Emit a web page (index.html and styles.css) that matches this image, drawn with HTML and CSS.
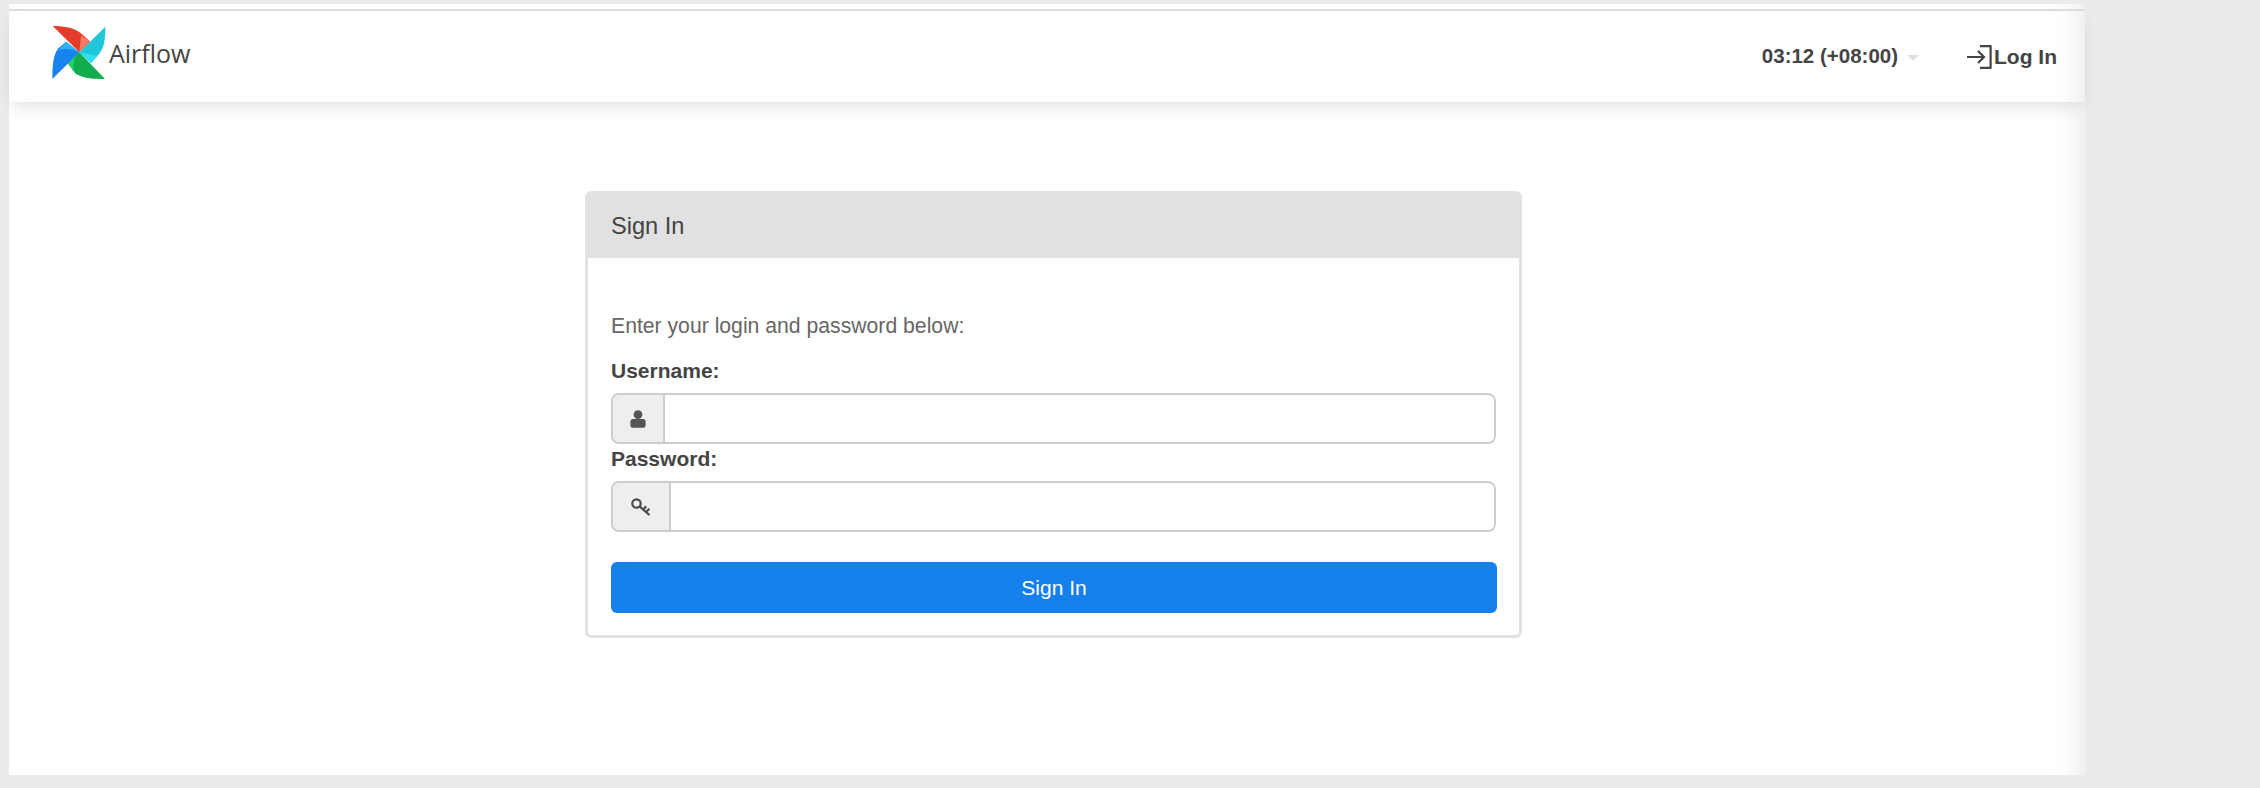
FILE: index.html
```html
<!DOCTYPE html>
<html lang="en">

<head>
  <meta charset="UTF-8" />
  <title>Airflow</title>
  <link rel="stylesheet" href="styles.css">
</head>

<body>
  <div class="page">
    <nav class="navbar">
      <a class="brand" href="#">
        <svg class="logo" viewBox="150 75 168 168" width="56" height="56">
          <!-- red -->
          <path d="M155 78C190 78 225 84 245 104L268 125L235 157Z" fill="#e43d2c" />
          <path d="M240 106L268 125L235 157Z" fill="#fb7a63" />
          <!-- cyan -->
          <path d="M313 80C313 115 310 140 296 160L270 190L235 157Z" fill="#1fc7d8" />
          <path d="M289 168L270 190L235 157Z" fill="#2fdff3" />
          <!-- green -->
          <path d="M312 237C280 237 250 236 225 222L200 190L235 157Z" fill="#11ad4c" />
          <path d="M224 166L235 157L200 190L222 220C212 200 220 180 224 166Z" fill="#22d36a" />
          <!-- blue -->
          <path d="M154 237C154 200 156 165 172 145L195 125L235 157Z" fill="#1783ee" />
          <path d="M195 125L235 157C215 146 190 144 172 150Z" fill="#2fb2f4" />
        </svg>
        <span class="brand-name">Airflow</span>
      </a>
      <div class="nav-right">
        <a class="clock" href="#">03:12 (+08:00)<span class="caret"></span></a>
        <a class="login-link" href="#">
          <svg viewBox="0 0 26 24" width="26" height="24" fill="none" stroke="#444" stroke-width="2.2">
            <path d="M0 12H17M11 6L17 12L11 18" />
            <path d="M13 1.2H23.6V22.8H13" stroke-linejoin="round" />
          </svg>
          <span>Log In</span>
        </a>
      </div>
    </nav>

    <div class="card">
      <div class="card-title">Sign In</div>
      <form class="card-body">
        <p class="intro">Enter your login and password below:</p>
        <label class="field-label">Username:</label>
        <div class="input-group">
          <span class="addon addon-user">
            <svg viewBox="0 0 16 18" width="16" height="18" fill="#555">
              <circle cx="8" cy="4.6" r="4.4" />
              <path d="M3 9H13C15 9 15.6 10.5 15.6 12V15C15.6 17 14.5 17.8 13 17.8H3C1.5 17.8 .4 17 .4 15V12C.4 10.5 1 9 3 9Z" />
            </svg>
          </span>
          <input class="text-input" type="text">
        </div>
        <label class="field-label">Password:</label>
        <div class="input-group">
          <span class="addon addon-key">
            <svg viewBox="0 0 20 18" width="20" height="18" fill="none" stroke="#4a4a4a" stroke-width="2.2">
              <circle cx="5.5" cy="5.5" r="4.2" />
              <path d="M8.6 8.4L18.4 17M13 10.6L15.2 8.4M15.8 13.2L18.4 10.8" />
            </svg>
          </span>
          <input class="text-input" type="password">
        </div>
        <button class="submit" type="button">Sign In</button>
      </form>
    </div>
  </div>
</body>

</html>
```

FILE: styles.css
```css
* {
  box-sizing: border-box;
  padding: 0;
  margin: 0;
}

html,
body {
  height: 100%;
}

body {
  background: #ebebeb;
  padding: 4px 0 0 9px;
  font-family: "Liberation Sans", Arial, sans-serif;
  font-size: 21px;
  color: #444;
  overflow: hidden;
}

a {
  color: inherit;
  text-decoration: none;
}

.page {
  width: 2076px;
  height: 771px;
  background: #fff;
  padding-top: 5px;
  box-shadow: inset -34px 0 28px -26px rgba(0, 0, 0, .08);
}

.navbar {
  height: 93px;
  border-top: 2px solid #dcdce0;
  padding: 0 28px 0 42px;
  display: flex;
  justify-content: space-between;
  align-items: center;
  box-shadow: 0 8px 16px -4px rgba(0, 0, 0, .13);
}

.brand {
  display: flex;
  align-items: center;
  margin-top: -8px;
}

.logo {
  display: block;
}

.brand-name {
  font-family: "Open Sans", sans-serif;
  font-size: 25px;
  color: #444;
  margin-left: 2px;
  margin-top: 1px;
}

.nav-right {
  display: flex;
  align-items: center;
  font-weight: bold;
}

.clock {
  display: flex;
  align-items: center;
  font-size: 20.5px;
  margin-top: -1px;
}

.caret {
  width: 0;
  height: 0;
  margin-left: 9px;
  margin-top: 4px;
  border-top: 6px solid #e3dde6;
  border-left: 6px solid transparent;
  border-right: 6px solid transparent;
}

.login-link {
  display: flex;
  align-items: center;
  margin-left: 48px;
}

.login-link svg {
  display: block;
  margin-right: 1px;
}

.card {
  width: 937px;
  margin: 89px 0 0 576px;
  border: 3px solid #e2e2e2;
  border-radius: 6px;
  background: #fff;
}

.card-title {
  height: 64px;
  background: #e1e1e1;
  padding-left: 23px;
  font-size: 23.6px;
  line-height: 65px;
}

.card-body {
  padding: 54px 23px 22px;
}

.intro {
  line-height: 28px;
  color: #666;
  font-size: 21.2px;
  margin-bottom: 17px;
}

.field-label {
  display: block;
  line-height: 28px;
  font-weight: bold;
  margin-bottom: 8px;
}

.input-group {
  display: flex;
  width: 885px;
  height: 51px;
  border: 2px solid #ccc;
  border-radius: 8px;
  overflow: hidden;
  margin-bottom: 1px;
}

.addon {
  display: flex;
  justify-content: center;
  align-items: center;
  flex: none;
  background: #eee;
  border-right: 2px solid #ccc;
}

.addon-user {
  width: 52px;
}

.addon-key {
  width: 58px;
}

.text-input {
  flex: 1;
  min-width: 0;
  border: 0;
  outline: 0;
  background: #fff;
}

.submit {
  display: block;
  width: 886px;
  height: 51px;
  margin-top: 30px;
  border: 0;
  border-radius: 6px;
  background: #157fec;
  color: #fff;
  font-family: inherit;
  font-size: 21px;
}
```
